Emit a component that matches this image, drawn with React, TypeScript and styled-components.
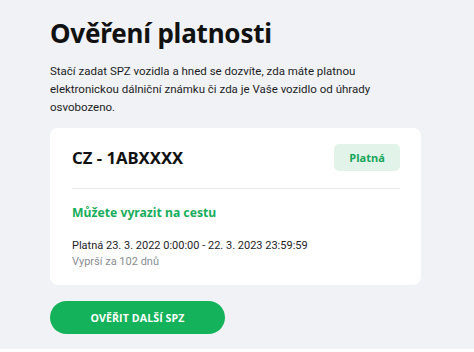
import React from "react";
import styled, { createGlobalStyle } from "styled-components";

const Global = createGlobalStyle`
  html, body { margin: 0; padding: 0; background: #ffffff; }
  body { font-family: Roboto, "Open Sans", sans-serif; }
  * { box-sizing: border-box; }
`;

const Page = styled.main`
  width: 474px;
  height: 349px;
  background: #f0f2f5;
  padding: 15px 50px 0 50px;
  display: flex;
  flex-direction: column;
`;

const Title = styled.h1`
  margin: 0;
  font-family: "Noto Sans", "Open Sans", sans-serif;
  font-weight: 700;
  font-size: 26px;
  line-height: 36px;
  letter-spacing: -0.2px;
  color: #111;
`;

const Intro = styled.p`
  margin: 11px 0 0 0;
  width: 330px;
  font-size: 11.5px;
  line-height: 18px;
  color: #1d1d1f;
`;

const Card = styled.section`
  margin-top: 12px;
  width: 371px;
  background: #fff;
  border-radius: 8px;
  padding: 16px 21px 15px 22px;
  display: flex;
  flex-direction: column;
`;

const CardHead = styled.div`
  display: flex;
  align-items: center;
  justify-content: space-between;
  padding-bottom: 17px;
  border-bottom: 1px solid #e6e8eb;
`;

const Plate = styled.div`
  font-family: "Noto Sans", "Open Sans", sans-serif;
  font-weight: 700;
  font-size: 16.7px;
  color: #111;
`;

const Badge = styled.span`
  width: 66px;
  height: 27px;
  display: flex;
  align-items: center;
  justify-content: center;
  border-radius: 5px;
  background: #e2f3ea;
  color: #17a55a;
  font-family: "Open Sans", sans-serif;
  font-weight: 700;
  font-size: 11px;
`;

const Status = styled.div`
  margin-top: 15px;
  font-family: "Noto Sans", "Open Sans", sans-serif;
  font-weight: 700;
  font-size: 12.2px;
  color: #16ad5a;
`;

const Line = styled.div<{ $muted?: boolean }>`
  font-size: 11px;
  line-height: 16px;
  color: ${(p) => (p.$muted ? "#8a8d91" : "#1d1d1f")};
`;

const Dates = styled.div`
  margin-top: 17px;
  display: flex;
  flex-direction: column;
`;

const Button = styled.button`
  margin-top: 16px;
  width: 175px;
  height: 33px;
  border: 0;
  border-radius: 17px;
  background: #14b25a;
  color: #fff;
  font-family: "Open Sans", sans-serif;
  font-weight: 700;
  font-size: 10.6px;
  letter-spacing: 0.1px;
  cursor: pointer;
`;

export default function App() {
  return (
    <>
      <Global />
      <Page>
        <Title>Ověření platnosti</Title>
        <Intro>
          Stačí zadat SPZ vozidla a hned se dozvíte, zda máte platnou elektronickou dálniční známku či zda je Vaše vozidlo od úhrady osvobozeno.
        </Intro>
        <Card>
          <CardHead>
            <Plate>CZ - 1ABXXXX</Plate>
            <Badge>Platná</Badge>
          </CardHead>
          <Status>Můžete vyrazit na cestu</Status>
          <Dates>
            <Line>Platná 23. 3. 2022 0:00:00 - 22. 3. 2023 23:59:59</Line>
            <Line $muted>Vyprší za 102 dnů</Line>
          </Dates>
        </Card>
        <Button>OVĚŘIT DALŠÍ SPZ</Button>
      </Page>
    </>
  );
}
